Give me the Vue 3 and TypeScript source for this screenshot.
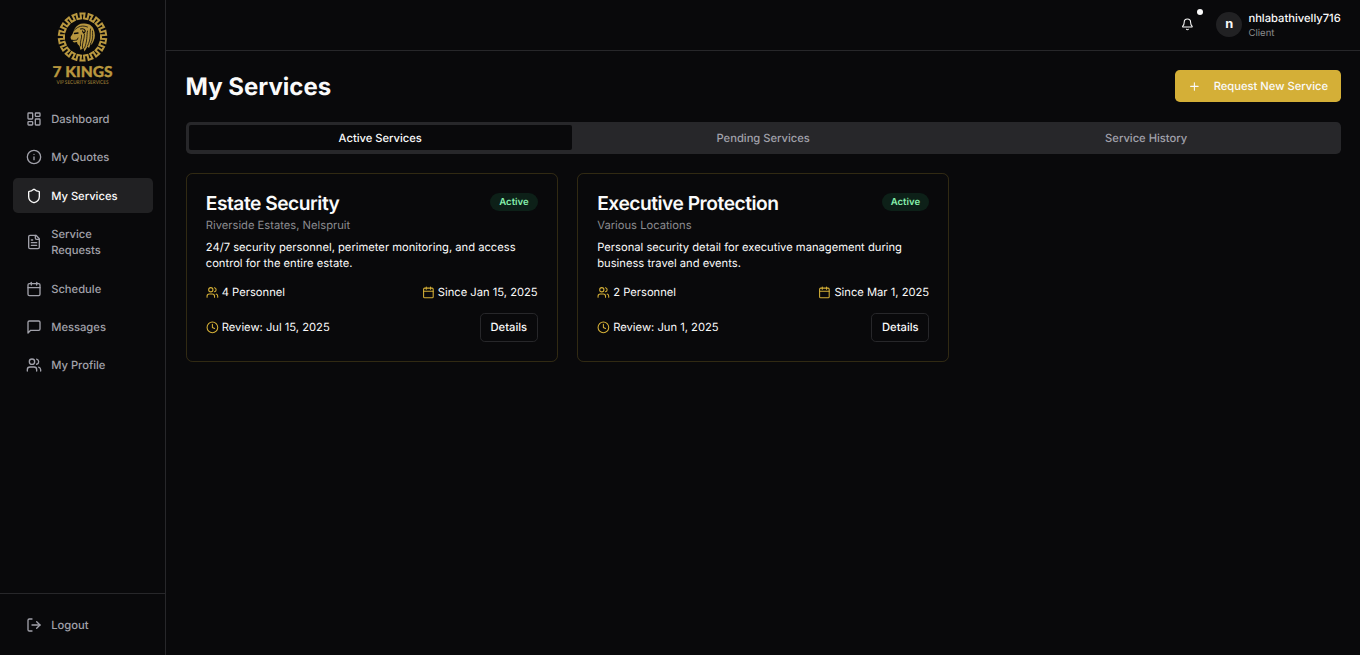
<script setup lang="ts">
interface NavItem {
  label: string
  icon: string
  active?: boolean
}

interface Service {
  name: string
  location: string
  description: string
  personnel: number
  since: string
  review: string
}

const icons: Record<string, string> = {
  dashboard:
    '<rect width="7" height="9" x="3" y="3" rx="1"/><rect width="7" height="5" x="14" y="3" rx="1"/><rect width="7" height="9" x="14" y="12" rx="1"/><rect width="7" height="5" x="3" y="16" rx="1"/>',
  info: '<circle cx="12" cy="12" r="10"/><path d="M12 16v-4"/><path d="M12 8h.01"/>',
  shield:
    '<path d="M20 13c0 5-3.500 7.500-7.660 8.950a1 1 0 0 1-.67-.01C7.500 20.500 4 18 4 13V6a1 1 0 0 1 1-1c2 0 4.500-1.200 6.240-2.720a1.170 1.170 0 0 1 1.520 0C14.510 3.810 17 5 19 5a1 1 0 0 1 1 1z"/>',
  file: '<path d="M15 2H6a2 2 0 0 0-2 2v16a2 2 0 0 0 2 2h12a2 2 0 0 0 2-2V7Z"/><path d="M14 2v4a2 2 0 0 0 2 2h4"/><path d="M10 9H8"/><path d="M16 13H8"/><path d="M16 17H8"/>',
  calendar:
    '<path d="M8 2v4"/><path d="M16 2v4"/><rect width="18" height="18" x="3" y="4" rx="2"/><path d="M3 10h18"/>',
  message: '<path d="M21 15a2 2 0 0 1-2 2H7l-4 4V5a2 2 0 0 1 2-2h14a2 2 0 0 1 2 2z"/>',
  users:
    '<path d="M16 21v-2a4 4 0 0 0-4-4H6a4 4 0 0 0-4 4v2"/><circle cx="9" cy="7" r="4"/><path d="M22 21v-2a4 4 0 0 0-3-3.870"/><path d="M16 3.130a4 4 0 0 1 0 7.750"/>',
  logout:
    '<path d="M9 21H5a2 2 0 0 1-2-2V5a2 2 0 0 1 2-2h4"/><path d="m16 17 5-5-5-5"/><path d="M21 12H9"/>',
  bell: '<path d="M10.268 21a2 2 0 0 0 3.464 0"/><path d="M3.262 15.326A1 1 0 0 0 4 17h16a1 1 0 0 0 .740-1.673C19.410 13.956 18 12.499 18 8A6 6 0 0 0 6 8c0 4.499-1.411 5.956-2.738 7.326"/>',
  plus: '<path d="M5 12h14"/><path d="M12 5v14"/>',
  clock: '<circle cx="12" cy="12" r="10"/><path d="M12 6v6l4 2"/>',
}

const nav: NavItem[] = [
  { label: 'Dashboard', icon: 'dashboard' },
  { label: 'My Quotes', icon: 'info' },
  { label: 'My Services', icon: 'shield', active: true },
  { label: 'Service Requests', icon: 'file' },
  { label: 'Schedule', icon: 'calendar' },
  { label: 'Messages', icon: 'message' },
  { label: 'My Profile', icon: 'users' },
]

const tabs: string[] = ['Active Services', 'Pending Services', 'Service History']

const services: Service[] = [
  {
    name: 'Estate Security',
    location: 'Riverside Estates, Nelspruit',
    description: '24/7 security personnel, perimeter monitoring, and access control for the entire estate.',
    personnel: 4,
    since: 'Jan 15, 2025',
    review: 'Jul 15, 2025',
  },
  {
    name: 'Executive Protection',
    location: 'Various Locations',
    description: 'Personal security detail for executive management during business travel and events.',
    personnel: 2,
    since: 'Mar 1, 2025',
    review: 'Jun 1, 2025',
  },
]

// Square-wave band that runs round the emblem
function meander(teeth: number, inner: number, outer: number): string {
  const step = (Math.PI * 2) / teeth
  const at = (r: number, a: number) => `${(r * Math.cos(a)).toFixed(2)} ${(r * Math.sin(a)).toFixed(2)}`
  const points: string[] = []
  for (let i = 0; i < teeth; i++) {
    const a = i * step - Math.PI / 2
    points.push(at(outer, a - step * 0.25), at(outer, a + step * 0.25))
    points.push(at(inner, a + step * 0.22), at(inner, a + step * 0.78))
  }
  return `M${points.join('L')}Z`
}
const ring = meander(18, 18.6, 23.7)
</script>

<template>
  <div class="app">
    <aside class="sidebar">
      <div class="brand">
        <svg class="emblem" viewBox="-31.500 -26 64 78" aria-label="7 Kings">
          <path :d="ring" fill="none" stroke="#b8973f" stroke-width="2" />
          <path
            fill="#b8973f"
            d="M-8-8C-6-12-2-14 2-13.500C8-13.500 11-10 12-5C13 0 12 3 9 8L8.500 6L6.500 11L5 9.500L2 14.500L1 11L-2 13L-3 9L-5 7L-5.500 5L-8.500 5.500L-10 4L-8.500 3L-11.500 2.500L-12 0L-10-3Z"
          />
          <g fill="none" stroke="#0a0a0c" stroke-width="0.800" stroke-linecap="round">
            <path d="M-8-7C-4-11 0-12 5-10" />
            <path d="M-8-3.500L-4.500-4" stroke-width="1.300" />
            <path d="M-9 3.500L-5.500 3L-4.500 1" />
            <path d="M-2-8C3-9 4-5 1-4L0-6" stroke-width="1.100" />
            <path d="M-1-2C0 1-3 4-2 9" />
            <path d="M2-3C2 3-1 7 0 11" />
            <path d="M5-6C4-1 5 4 2 11" />
            <path d="M8-8C7-2 9 1 5 9" />
            <path d="M10-6C10-2 11 2 8 7" />
          </g>
          <text class="brand-name" x="0" y="40" text-anchor="middle" textLength="60" lengthAdjust="spacingAndGlyphs">7 KINGS</text>
          <text class="brand-tag" x="0" y="46.600" text-anchor="middle" textLength="52" lengthAdjust="spacingAndGlyphs">VIP SECURITY SERVICES</text>
        </svg>
      </div>
      <nav class="nav">
        <a v-for="item in nav" :key="item.label" class="nav-item" :class="{ active: item.active }">
          <svg class="icon nav-icon" viewBox="0 0 24 24" v-html="icons[item.icon]"></svg>
          <span>{{ item.label }}</span>
        </a>
      </nav>
      <div class="sidebar-foot">
        <a class="nav-item">
          <svg class="icon nav-icon" viewBox="0 0 24 24" v-html="icons.logout"></svg>
          <span>Logout</span>
        </a>
      </div>
    </aside>

    <div class="content">
      <header class="topbar">
        <button class="bell">
          <svg class="icon small" viewBox="0 0 24 24" v-html="icons.bell"></svg>
          <i class="dot"></i>
        </button>
        <div class="user">
          <span class="avatar">n</span>
          <div>
            <div class="user-name">nhlabathivelly716</div>
            <div class="user-role">Client</div>
          </div>
        </div>
      </header>

      <main class="main">
        <div class="heading">
          <h1>My Services</h1>
          <button class="primary">
            <svg class="icon small" viewBox="0 0 24 24" v-html="icons.plus"></svg>
            <span>Request New Service</span>
          </button>
        </div>

        <div class="tabs">
          <button v-for="(tab, i) in tabs" :key="tab" class="tab" :class="{ selected: i === 0 }">{{ tab }}</button>
        </div>

        <div class="cards">
          <article v-for="s in services" :key="s.name" class="card">
            <div class="card-head">
              <h3>{{ s.name }}</h3>
              <span class="badge">Active</span>
            </div>
            <p class="location">{{ s.location }}</p>
            <p class="description">{{ s.description }}</p>
            <div class="row">
              <span class="meta">
                <svg class="icon small" viewBox="0 0 24 24" v-html="icons.users"></svg>{{ s.personnel }} Personnel
              </span>
              <span class="meta">
                <svg class="icon small" viewBox="0 0 24 24" v-html="icons.calendar"></svg>Since {{ s.since }}
              </span>
            </div>
            <div class="row">
              <span class="meta">
                <svg class="icon small" viewBox="0 0 24 24" v-html="icons.clock"></svg>Review: {{ s.review }}
              </span>
              <button class="details">Details</button>
            </div>
          </article>
        </div>
      </main>
    </div>
  </div>
</template>

<style>
body {
  margin: 0;
  background: #09090b;
}
</style>

<style scoped>
.app {
  display: flex;
  height: 100vh;
  overflow: hidden;
  background: #09090b;
  color: #fafafa;
  font-family: Inter, 'Liberation Sans', sans-serif;
  font-size: 11.2px;
  line-height: 16px;
  text-rendering: geometricPrecision;
}
.app * {
  box-sizing: border-box;
}
button {
  margin: 0;
  border: 0;
  padding: 0;
  background: none;
  color: inherit;
  font: inherit;
  font-weight: 500;
  text-rendering: inherit;
}
h1,
h3,
p {
  margin: 0;
}
.icon {
  flex: none;
  fill: none;
  stroke: currentColor;
  stroke-width: 2;
  stroke-linecap: round;
  stroke-linejoin: round;
}
.small {
  width: 12.8px;
  height: 12.8px;
}
.sidebar {
  flex: none;
  display: flex;
  flex-direction: column;
  width: 166.4px;
  border-right: 1px solid #27272a;
}
.brand {
  display: flex;
  justify-content: center;
  height: 88.700px;
  padding-top: 11px;
}
.emblem {
  flex: none;
  width: 64px;
  height: 78px;
}
.brand-name {
  fill: #b8973f;
  stroke: #b8973f;
  stroke-width: 0.3;
  font: 900 15px Lato, sans-serif;
}
.brand-tag {
  fill: #a58638;
  font: 400 5.4px Lato, sans-serif;
}
.nav {
  flex: 1;
  display: flex;
  flex-direction: column;
  gap: 3.2px;
  padding: 12.8px;
}
.nav-item {
  display: flex;
  align-items: center;
  gap: 9.6px;
  padding: 9.6px 12.8px;
  border-radius: 4.8px;
  color: #a1a1aa;
  font-weight: 500;
}
.nav-item.active {
  background: #212123;
  color: #fafafa;
}
.nav-icon {
  width: 16px;
  height: 16px;
}
.sidebar-foot {
  padding: 12.8px;
  border-top: 1px solid #27272a;
}
.content {
  flex: 1;
  min-width: 0;
}
.topbar {
  display: flex;
  align-items: center;
  justify-content: flex-end;
  gap: 12.8px;
  height: 51.2px;
  padding: 0 19.2px 1px;
  border-bottom: 1px solid #27272a;
}
.bell {
  position: relative;
  display: flex;
  align-items: center;
  justify-content: center;
  width: 32px;
  height: 32px;
}
.dot {
  position: absolute;
  top: 0.4px;
  right: 0.4px;
  width: 6.4px;
  height: 6.4px;
  border-radius: 50%;
  background: #fafafa;
}
.user {
  display: flex;
  align-items: center;
  gap: 6.4px;
}
.avatar {
  display: flex;
  align-items: center;
  justify-content: center;
  width: 25.6px;
  height: 25.6px;
  padding-top: 0.8px;
  border-radius: 50%;
  background: #212123;
  font-size: 12.8px;
  font-weight: 700;
}
.user-name {
  font-weight: 500;
}
.user-role {
  padding-top: 1.6px;
  margin-bottom: -1.6px;
  color: #8b8b8b;
  font-size: 9.6px;
  line-height: 12.8px;
}
.main {
  display: flex;
  flex-direction: column;
  gap: 19.2px;
  padding: 19.2px;
}
.heading {
  display: flex;
  align-items: center;
  justify-content: space-between;
  height: 32px;
}
h1 {
  padding-top: 1.6px;
  font-size: 24px;
  font-weight: 700;
  line-height: 30.4px;
}
.primary {
  display: flex;
  align-items: center;
  gap: 12.8px;
  height: 32px;
  padding: 0 12.8px;
  border-radius: 4.8px;
  background: #d4af37;
}
.tabs {
  display: grid;
  grid-template-columns: repeat(3, 1fr);
  height: 32px;
  padding: 3.2px;
  border-radius: 4.8px;
  background: #27272a;
}
.tab {
  border-radius: 2px;
  color: #a1a1aa;
}
.tab.selected {
  background: #09090b;
  color: #fafafa;
}
.cards {
  display: grid;
  grid-template-columns: repeat(3, 1fr);
  gap: 19.2px;
}
.card {
  height: 188.8px;
  padding: 19.2px;
  border: 1px solid rgba(212, 175, 55, 0.2);
  border-radius: 6.4px;
}
.card-head {
  display: flex;
  align-items: flex-start;
  justify-content: space-between;
  height: 19.2px;
}
h3 {
  padding-top: 0.8px;
  font-size: 19.2px;
  font-weight: 600;
  line-height: 19.2px;
  letter-spacing: -0.48px;
}
.badge {
  padding: 4.2px 9px 0.6px;
  border-radius: 9px;
  background: #0d2018;
  color: #86efac;
  font-size: 9.6px;
  font-weight: 600;
  line-height: 12.8px;
}
.location {
  margin-top: 4.8px;
  color: #8b8b8f;
}
.description {
  margin: 6.4px 0 12.8px;
}
.row {
  display: flex;
  align-items: center;
  justify-content: space-between;
  margin-bottom: 12.8px;
}
.meta {
  display: flex;
  align-items: center;
  gap: 3.2px;
}
.meta .icon {
  color: #d4af37;
}
.details {
  height: 28.8px;
  padding: 0 9.6px;
  border: 1px solid #27272a;
  border-radius: 4.8px;
}
</style>
